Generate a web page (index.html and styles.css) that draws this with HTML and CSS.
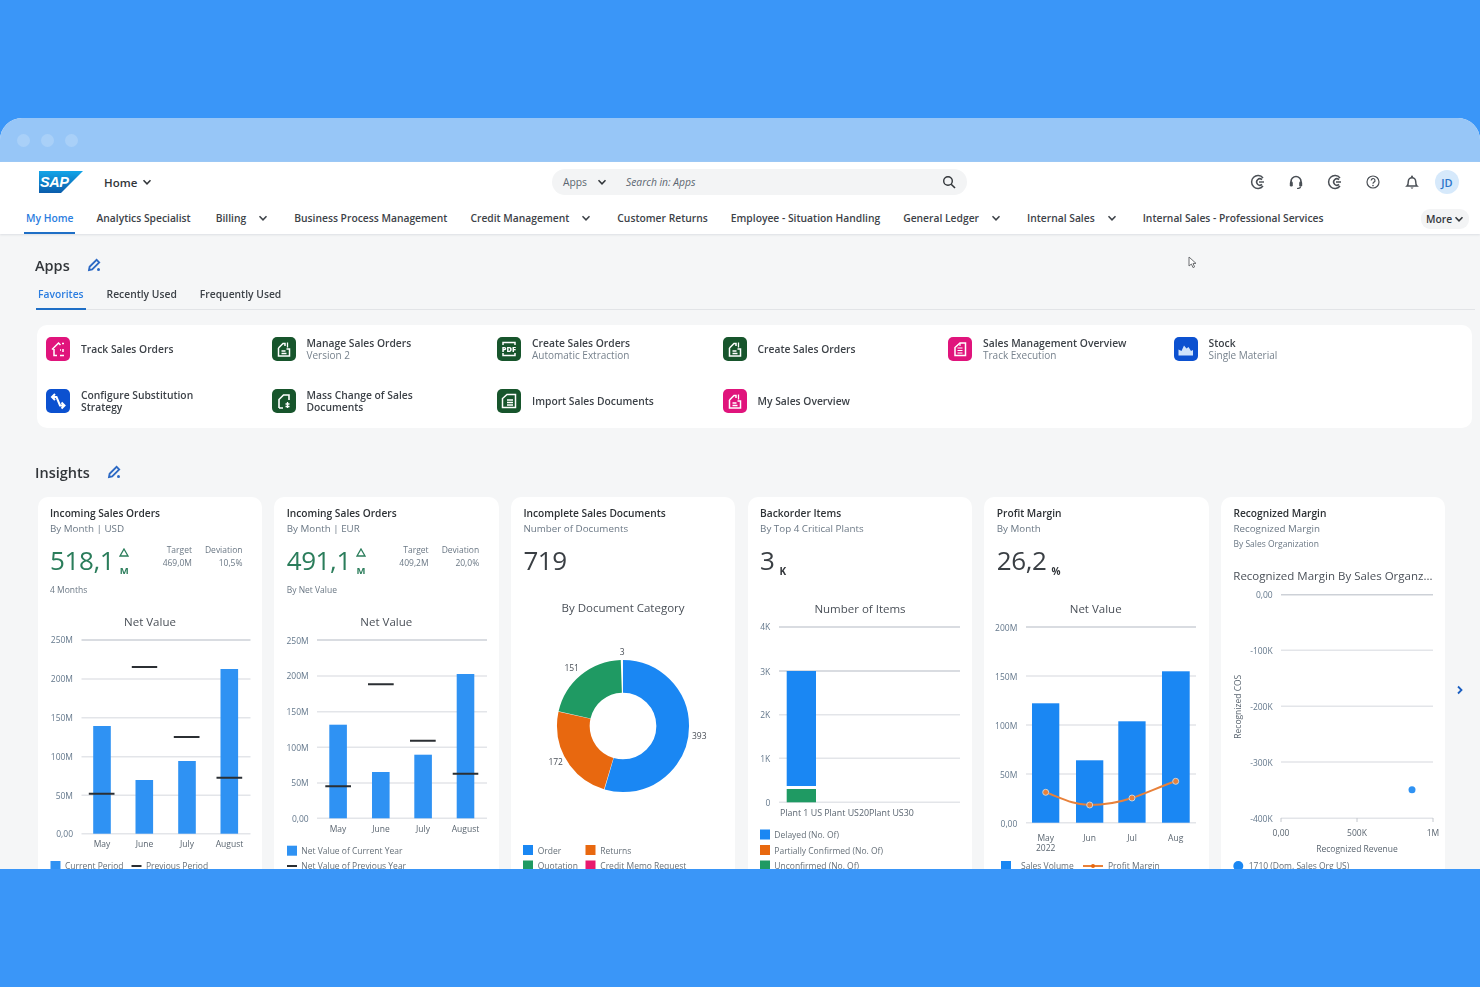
FILE: index.html
```html
<!DOCTYPE html>
<html lang="en">
<head>
    <meta charset="UTF-8">
    <title>SAP Home</title>
    <link rel="stylesheet" href="styles.css">
</head>
<body>
    <svg class="defs" width="0" height="0">
        <defs>
            <linearGradient id="sapBlue" x1="0" y1="0" x2="0" y2="1">
                <stop offset="0" stop-color="#12a5e8"/>
                <stop offset="1" stop-color="#0b5cab"/>
            </linearGradient>
            <symbol id="chev" viewBox="0 0 10 10">
                <path d="M1.5 3.2 5 6.8 8.5 3.2" fill="none" stroke="currentColor" stroke-width="1.5"/>
            </symbol>
            <symbol id="pen" viewBox="0 0 14 14">
                <path d="M2 12l.6-3.2L9.600 1.800l2.600 2.600-7 7z" fill="none" stroke="currentColor" stroke-width="1.800"/>
                <circle cx="11.500" cy="11.500" r="1.500" fill="currentColor"/>
            </symbol>
            <symbol id="ring" viewBox="0 0 16 16">
                <path d="M13 4a6.4 6.4 0 1 0 0 8" fill="none" stroke="currentColor" stroke-width="1.5"/>
                <path d="M12 5.6A3.2 3.2 0 1 0 12 10.4" fill="none" stroke="currentColor" stroke-width="1.5"/>
                <path d="M9 8h5" stroke="currentColor" stroke-width="1.4"/>
            </symbol>
        </defs>
    </svg>

    <div class="window">
        <div class="titlebar">
            <span class="dot"></span><span class="dot"></span><span class="dot"></span>
        </div>

        <header class="shell">
            <div class="shell-top">
                <div class="brand">
                    <svg class="logo" viewBox="0 0 44 22" width="44" height="22">
                        <path d="M0 0H44L22 22H0Z" fill="url(#sapBlue)"/>
                        <text x="1" y="16" class="logo-text">SAP</text>
                    </svg>
                    <span class="home">Home</span>
                    <svg class="chev"><use href="#chev"/></svg>
                </div>
                <div class="search">
                    <span class="search-scope">Apps</span>
                    <svg class="chev search-chev"><use href="#chev"/></svg>
                    <span class="search-input">Search in: Apps</span>
                    <svg class="search-icon" viewBox="0 0 14 14" width="14" height="14">
                        <circle cx="6" cy="6" r="4.3" fill="none" stroke="#32363a" stroke-width="1.4"/>
                        <path d="M9.2 9.2 13 13" stroke="#32363a" stroke-width="1.6"/>
                    </svg>
                </div>
                <div class="actions">
                    <svg class="action"><use href="#ring"/></svg>
                    <svg class="action" viewBox="0 0 16 16">
                        <path d="M3 10V7.5a5 5 0 0 1 10 0V10" fill="none" stroke="currentColor" stroke-width="1.6"/>
                        <rect x="1.8" y="7.6" width="3" height="5" rx="1.4" fill="currentColor"/>
                        <rect x="11.2" y="7.6" width="3" height="5" rx="1.4" fill="currentColor"/>
                        <path d="M12.5 12.5c0 1.4-1.6 2-3.5 2" fill="none" stroke="currentColor" stroke-width="1.2"/>
                    </svg>
                    <svg class="action"><use href="#ring"/></svg>
                    <svg class="action" viewBox="0 0 16 16">
                        <circle cx="8" cy="8" r="6" fill="none" stroke="currentColor" stroke-width="1.2"/>
                        <path d="M6.2 6.4a1.9 1.9 0 1 1 2.8 1.7c-.7.4-1 .8-1 1.6" fill="none" stroke="currentColor" stroke-width="1.2"/>
                        <circle cx="8" cy="11.6" r=".8" fill="currentColor"/>
                    </svg>
                    <svg class="action" viewBox="0 0 16 16">
                        <path d="M3 12c1.100-1 1.300-2 1.300-4.500a3.700 3.700 0 0 1 7.400 0c0 2.500.2 3.500 1.300 4.500z" fill="none" stroke="currentColor" stroke-width="1.5"/>
                        <path d="M6.500 13.600a1.600 1.600 0 0 0 3 0z" fill="currentColor"/>
                        <circle cx="8" cy="2.600" r="1" fill="currentColor"/>
                    </svg>
                    <span class="avatar">JD</span>
                </div>
            </div>
            <nav class="nav">
                <a class="nav-item active">My Home</a>
                <a class="nav-item wide">Analytics Specialist</a>
                <a class="nav-item has-menu">Billing <svg class="chev"><use href="#chev"/></svg></a>
                <a class="nav-item">Business Process Management</a>
                <a class="nav-item has-menu">Credit Management <svg class="chev"><use href="#chev"/></svg></a>
                <a class="nav-item">Customer Returns</a>
                <a class="nav-item">Employee - Situation Handling</a>
                <a class="nav-item has-menu">General Ledger <svg class="chev"><use href="#chev"/></svg></a>
                <a class="nav-item has-menu">Internal Sales <svg class="chev"><use href="#chev"/></svg></a>
                <a class="nav-item">Internal Sales - Professional Services</a>
                <a class="more">More <svg class="chev"><use href="#chev"/></svg></a>
            </nav>
        </header>

        <main class="content">
            <div class="section-head">
                <h2>Apps</h2>
                <svg class="pen"><use href="#pen"/></svg>
            </div>
            <div class="tabs">
                <a class="tab active">Favorites</a>
                <a class="tab">Recently Used</a>
                <a class="tab">Frequently Used</a>
            </div>

            <div class="apps">
                <div class="app">
                    <svg class="tile pink" viewBox="0 0 24 24">
                        <path d="M6 12.500 12.500 6l2 2M8 12v6.500h3M16 6.500h2M17 12v3M14 18.500h4M14 13h1" fill="none" stroke="#fff" stroke-width="1.500"/>
                    </svg>
                    <div><p class="app-name">Track Sales Orders</p></div>
                </div>
                <div class="app">
                    <svg class="tile green" viewBox="0 0 24 24">
                        <path d="M6.500 11 11 6.500h2V9M6.500 11v8h11v-7h-3" fill="none" stroke="#fff" stroke-width="1.500"/>
                        <path d="M9.500 14h4M9.500 16.500h5M15.500 5.500v5" stroke="#fff" stroke-width="1.300"/>
                    </svg>
                    <div><p class="app-name">Manage Sales Orders</p><p class="app-sub">Version 2</p></div>
                </div>
                <div class="app">
                    <svg class="tile green" viewBox="0 0 24 24">
                        <path d="M6 8V5.500h12V8M6 16v2.500h12V16" fill="none" stroke="#fff" stroke-width="1.500"/>
                        <text x="12" y="14.800" class="pdf">PDF</text>
                    </svg>
                    <div><p class="app-name">Create Sales Orders</p><p class="app-sub">Automatic Extraction</p></div>
                </div>
                <div class="app">
                    <svg class="tile green" viewBox="0 0 24 24">
                        <path d="M6.500 11 11 6.500h2V9M6.500 11v8h11v-7h-3" fill="none" stroke="#fff" stroke-width="1.500"/>
                        <path d="M9.500 14h4M9.500 16.500h5M15.500 5.500v5" stroke="#fff" stroke-width="1.300"/>
                    </svg>
                    <div><p class="app-name">Create Sales Orders</p></div>
                </div>
                <div class="app">
                    <svg class="tile pink" viewBox="0 0 24 24">
                        <path d="M7 10.500 12 6h5.500v12.500H7z" fill="none" stroke="#fff" stroke-width="1.500"/>
                        <path d="M9.500 11h5M9.500 13.500h5M9.500 16h5M12 6v3" stroke="#fff" stroke-width="1.200"/>
                    </svg>
                    <div><p class="app-name">Sales Management Overview</p><p class="app-sub">Track Execution</p></div>
                </div>
                <div class="app">
                    <svg class="tile blue" viewBox="0 0 24 24">
                        <path d="M4.500 18.500v-6l3 1.500 2.500-5.500 2.500 3 2-1.500 2.500 4 2-1v5.500z" fill="#cfe3fb"/>
                    </svg>
                    <div><p class="app-name">Stock</p><p class="app-sub">Single Material</p></div>
                </div>
                <div class="app">
                    <svg class="tile blue" viewBox="0 0 24 24">
                        <path d="M6.500 8h4l3.500 8.500h4M15.500 13.500l3 3-3 3M9 5 6 8l3 3" fill="none" stroke="#fff" stroke-width="2"/>
                    </svg>
                    <div><p class="app-name">Configure Substitution<br>Strategy</p></div>
                </div>
                <div class="app">
                    <svg class="tile green" viewBox="0 0 24 24">
                        <path d="M7 19v-8.500L11.500 6H17v5" fill="none" stroke="#fff" stroke-width="1.600"/>
                        <path d="M7 19h4M15.500 13v6M13.500 15h4M13.500 17.500h4" fill="none" stroke="#fff" stroke-width="1.300"/>
                    </svg>
                    <div><p class="app-name">Mass Change of Sales<br>Documents</p></div>
                </div>
                <div class="app">
                    <svg class="tile green" viewBox="0 0 24 24">
                        <path d="M5.500 18.500V9.500L10 5.500h8.500v13z" fill="none" stroke="#fff" stroke-width="1.500"/>
                        <path d="M10 11h6M10 13.500h6M10 16h6" stroke="#fff" stroke-width="1.300"/>
                    </svg>
                    <div><p class="app-name">Import Sales Documents</p></div>
                </div>
                <div class="app">
                    <svg class="tile pink" viewBox="0 0 24 24">
                        <path d="M6.500 11 11 6.500h2V9M6.500 11v8h11v-7h-3" fill="none" stroke="#fff" stroke-width="1.500"/>
                        <path d="M9.500 14h4M9.500 16.500h5M15.500 5.500v5" stroke="#fff" stroke-width="1.300"/>
                    </svg>
                    <div><p class="app-name">My Sales Overview</p></div>
                </div>
            </div>

            <div class="section-head insights-head">
                <h2>Insights</h2>
                <svg class="pen"><use href="#pen"/></svg>
            </div>

            <div class="cards">
                <section class="card">
                    <div class="card-head">
                        <p class="card-title">Incoming Sales Orders</p>
                        <p class="card-sub">By Month | USD</p>
                        <div class="kpi">
                            <span class="kpi-value good">518,1</span>
                            <span class="kpi-unit good">
                                <svg class="delta" viewBox="0 0 10 9" width="10" height="9"><path d="M5 1 9 8H1Z" fill="none" stroke="currentColor" stroke-width="1.300"/></svg>
                                M
                            </span>
                            <div class="kpi-side"><span>Target</span><span>469,0M</span></div>
                            <div class="kpi-side"><span>Deviation</span><span>10,5%</span></div>
                        </div>
                        <p class="card-foot">4 Months</p>
                    </div>
                    <svg class="chart" viewBox="37.500 600 224.500 269" width="224.500" height="269">
                        <text x="149.500" y="626" class="chart-title">Net Value</text>
                        <g class="grid">
                            <path class="grid-top" d="M81 640H250"/>
                            <path d="M81 679H250M81 717.700H250M81 756.700H250M81 795.300H250M81 833.700H250"/>
                        </g>
                        <g class="ticks">
                            <text x="72.500" y="643">250M</text><text x="72.500" y="682">200M</text><text x="72.500" y="721">150M</text>
                            <text x="72.500" y="760">100M</text><text x="72.500" y="799">50M</text><text x="72.500" y="837">0,00</text>
                        </g>
                        <g class="bars">
                            <rect x="92.700" y="726" width="17.600" height="107.700"/>
                            <rect x="135" y="780" width="17.600" height="53.700"/>
                            <rect x="177.700" y="761" width="17.600" height="72.700"/>
                            <rect x="220" y="669" width="17.600" height="164.700"/>
                        </g>
                        <path class="target" d="M88.300 793.700H114M131.300 667H156.700M173.300 737H199M216 777.700H241.700"/>
                        <g class="axis">
                            <text x="101.500" y="847">May</text><text x="144" y="847">June</text><text x="186.500" y="847">July</text><text x="229" y="847">August</text>
                        </g>
                        <g class="legend">
                            <rect x="50" y="861" width="10" height="10" fill="#2f92f3"/><text x="64.500" y="869">Current Period</text>
                            <path class="target" d="M131 866H141"/><text x="145.500" y="869">Previous Period</text>
                        </g>
                    </svg>
                </section>

                <section class="card">
                    <div class="card-head">
                        <p class="card-title">Incoming Sales Orders</p>
                        <p class="card-sub">By Month | EUR</p>
                        <div class="kpi">
                            <span class="kpi-value good">491,1</span>
                            <span class="kpi-unit good">
                                <svg class="delta" viewBox="0 0 10 9" width="10" height="9"><path d="M5 1 9 8H1Z" fill="none" stroke="currentColor" stroke-width="1.300"/></svg>
                                M
                            </span>
                            <div class="kpi-side"><span>Target</span><span>409,2M</span></div>
                            <div class="kpi-side"><span>Deviation</span><span>20,0%</span></div>
                        </div>
                        <p class="card-foot">By Net Value</p>
                    </div>
                    <svg class="chart" viewBox="274 600 224.500 269" width="224.500" height="269">
                        <text x="386.300" y="626" class="chart-title">Net Value</text>
                        <g class="grid">
                            <path class="grid-top" d="M317 640H487"/>
                            <path d="M317 676H487M317 711.700H487M317 747.300H487M317 783H487M317 818.300H487"/>
                        </g>
                        <g class="ticks">
                            <text x="308.700" y="644">250M</text><text x="308.700" y="679">200M</text><text x="308.700" y="715">150M</text>
                            <text x="308.700" y="751">100M</text><text x="308.700" y="786">50M</text><text x="308.700" y="822">0,00</text>
                        </g>
                        <g class="bars">
                            <rect x="329.300" y="724.700" width="17.600" height="93.600"/>
                            <rect x="372" y="772" width="17.600" height="46.300"/>
                            <rect x="414.300" y="754.700" width="17.600" height="63.600"/>
                            <rect x="456.700" y="674" width="17.600" height="144.300"/>
                        </g>
                        <path class="target" d="M325.300 786.300H351M368 684.300H393.700M410 740.700H435.700M452.700 773.700H478.300"/>
                        <g class="axis">
                            <text x="338" y="832">May</text><text x="381" y="832">June</text><text x="423" y="832">July</text><text x="465.500" y="832">August</text>
                        </g>
                        <g class="legend">
                            <rect x="287" y="845.700" width="10" height="10" fill="#2f92f3"/><text x="301.300" y="854">Net Value of Current Year</text>
                            <path class="target" d="M287 866H297"/><text x="301.300" y="869">Net Value of Previous Year</text>
                        </g>
                    </svg>
                </section>

                <section class="card">
                    <div class="card-head">
                        <p class="card-title">Incomplete Sales Documents</p>
                        <p class="card-sub">Number of Documents</p>
                        <div class="kpi">
                            <span class="kpi-value">719</span>
                        </div>
                    </div>
                    <svg class="chart" viewBox="511 600 224.500 269" width="224.500" height="269">
                        <text x="623" y="612" class="chart-title">By Document Category</text>
                        <g class="donut">
                            <circle class="slice" cx="623" cy="726" r="49.700" pathLength="719" stroke="#1a87f3" stroke-dasharray="392 327" transform="rotate(-90 623 726)"/>
                            <circle class="slice" cx="623" cy="726" r="49.700" pathLength="719" stroke="#e8680f" stroke-dasharray="171 548" stroke-dashoffset="-393" transform="rotate(-90 623 726)"/>
                            <circle class="slice" cx="623" cy="726" r="49.700" pathLength="719" stroke="#1f9a63" stroke-dasharray="150 569" stroke-dashoffset="-565" transform="rotate(-90 623 726)"/>
                        </g>
                        <g class="slice-labels">
                            <text x="622.300" y="655">3</text><text x="571.700" y="671">151</text><text x="555.700" y="765">172</text><text x="699.300" y="739">393</text>
                        </g>
                        <g class="legend">
                            <rect x="523" y="845" width="10" height="10" fill="#1a87f3"/><text x="537.700" y="853.500">Order</text>
                            <rect x="585.500" y="845" width="10" height="10" fill="#e8680f"/><text x="600.300" y="853.500">Returns</text>
                            <rect x="523" y="860.500" width="10" height="10" fill="#1f9a63"/><text x="537.700" y="869">Quotation</text>
                            <rect x="585.500" y="860.500" width="10" height="10" fill="#e9196f"/><text x="600.300" y="869">Credit Memo Request</text>
                        </g>
                    </svg>
                </section>

                <section class="card">
                    <div class="card-head">
                        <p class="card-title">Backorder Items</p>
                        <p class="card-sub">By Top 4 Critical Plants</p>
                        <div class="kpi">
                            <span class="kpi-value">3</span>
                            <span class="kpi-suffix">K</span>
                        </div>
                    </div>
                    <svg class="chart" viewBox="748 600 224.500 269" width="224.500" height="269">
                        <text x="860" y="613" class="chart-title">Number of Items</text>
                        <g class="grid">
                            <path class="grid-top" d="M779 627H960M779 671H960"/>
                            <path d="M779 714.700H960M779 758.300H960M779 802.300H960"/>
                        </g>
                        <g class="ticks">
                            <text x="770.300" y="630">4K</text><text x="770.300" y="674.500">3K</text><text x="770.300" y="718">2K</text>
                            <text x="770.300" y="762">1K</text><text x="770.300" y="805.500">0</text>
                        </g>
                        <rect x="786.700" y="671" width="29.300" height="115" fill="#1a87f3"/>
                        <rect x="786.700" y="789" width="29.300" height="13.300" fill="#1f9a63"/>
                        <text x="780" y="816" class="cats">Plant 1 US Plant US20Plant US30</text>
                        <g class="legend">
                            <rect x="760" y="829.500" width="10" height="10" fill="#1a87f3"/><text x="774.300" y="838">Delayed (No. Of)</text>
                            <rect x="760" y="845" width="10" height="10" fill="#e8680f"/><text x="774.300" y="853.500">Partially Confirmed (No. Of)</text>
                            <rect x="760" y="860.500" width="10" height="10" fill="#1f9a63"/><text x="774.300" y="869">Unconfirmed (No. Of)</text>
                        </g>
                    </svg>
                </section>

                <section class="card">
                    <div class="card-head">
                        <p class="card-title">Profit Margin</p>
                        <p class="card-sub">By Month</p>
                        <div class="kpi">
                            <span class="kpi-value">26,2</span>
                            <span class="kpi-suffix">%</span>
                        </div>
                    </div>
                    <svg class="chart" viewBox="985 600 224.500 269" width="224.500" height="269">
                        <text x="1096.700" y="613" class="chart-title">Net Value</text>
                        <g class="grid">
                            <path class="grid-top" d="M1027 627H1197"/>
                            <path d="M1027 676H1197M1027 725H1197M1027 774H1197M1027 822.700H1197"/>
                        </g>
                        <g class="ticks">
                            <text x="1018.300" y="630.500">200M</text><text x="1018.300" y="680">150M</text><text x="1018.300" y="729">100M</text>
                            <text x="1018.300" y="777.500">50M</text><text x="1018.300" y="826.500">0,00</text>
                        </g>
                        <g class="bars-wide">
                            <rect x="1033" y="703.300" width="27.300" height="119.400"/>
                            <rect x="1077" y="760.300" width="27.300" height="62.400"/>
                            <rect x="1119.300" y="721.300" width="27.300" height="101.400"/>
                            <rect x="1163" y="671.300" width="27.700" height="151.400"/>
                        </g>
                        <path class="trend" d="M1046.700 792.300C1062 798 1075 805 1090.700 805S1118 803 1133 798 1160 787 1176.700 781.300"/>
                        <g class="trend-dots">
                            <circle cx="1046.700" cy="792.300" r="3"/><circle cx="1090.700" cy="805" r="3"/><circle cx="1133" cy="798" r="3"/><circle cx="1176.700" cy="781.300" r="3"/>
                        </g>
                        <g class="axis">
                            <text x="1046.700" y="841">May</text><text x="1046.700" y="851">2022</text><text x="1090.700" y="841">Jun</text><text x="1133" y="841">Jul</text><text x="1176.700" y="841">Aug</text>
                        </g>
                        <g class="legend">
                            <rect x="1002" y="861" width="10" height="10" fill="#1a87f3"/><text x="1022" y="869">Sales Volume</text>
                            <path class="trend" d="M1084 866H1104"/><circle cx="1094" cy="866" r="2" fill="#e8680f"/><text x="1109" y="869">Profit Margin</text>
                        </g>
                    </svg>
                </section>

                <section class="card">
                    <div class="card-head short">
                        <p class="card-title">Recognized Margin</p>
                        <p class="card-sub">Recognized Margin</p>
                        <p class="card-note">By Sales Organization</p>
                    </div>
                    <svg class="chart" viewBox="1221 557 224.500 312" width="224.500" height="312">
                        <text x="1233.300" y="580" class="chart-title start">Recognized Margin By Sales Organz...</text>
                        <g class="grid">
                            <path class="grid-top" d="M1281 594.700H1433"/>
                            <path d="M1281 650.300H1433M1281 706.300H1433M1281 762H1433M1281 818.300H1433"/>
                        </g>
                        <g class="ticks">
                            <text x="1272.700" y="598">0,00</text><text x="1272.700" y="654">-100K</text><text x="1272.700" y="710">-200K</text>
                            <text x="1272.700" y="765.500">-300K</text><text x="1272.700" y="822">-400K</text>
                        </g>
                        <path class="tick-marks" d="M1281 818v4M1357 818v4M1433 818v4"/>
                        <circle cx="1412" cy="789.700" r="3.500" fill="#2f92f3"/>
                        <g class="axis">
                            <text x="1281" y="835.500">0,00</text><text x="1357" y="835.500">500K</text><text x="1433" y="835.500">1M</text>
                            <text x="1357" y="851.500">Recognized Revenue</text>
                            <text x="1241" y="706.700" transform="rotate(-90 1241 706.700)">Recognized COS</text>
                        </g>
                        <g class="legend">
                            <circle cx="1238.300" cy="866" r="5" fill="#1a87f3"/><text x="1248.700" y="869">1710 (Dom. Sales Org US)</text>
                        </g>
                    </svg>
                </section>
            </div>

            <svg class="next" viewBox="0 0 8 10" width="8" height="10"><path d="M2 1.500 5.500 5 2 8.500" fill="none" stroke="#1b5fc1" stroke-width="1.800"/></svg>
            <svg class="cursor" viewBox="0 0 10 13" width="10" height="13"><path d="M1 1v9l2.400-2 1.600 3.600 1.600-.7L5 7.400h3z" fill="#fff" stroke="#6a6d70" stroke-width="1"/></svg>
        </main>
    </div>
</body>
</html>
```

FILE: styles.css
```css
* {
    box-sizing: border-box;
}

body {
    margin: 0;
    height: 987px;
    padding-top: 118px;
    overflow: hidden;
    background-color: #3a96f8;
    color: #32363a;
    font-family: "Open Sans", "Noto Sans", sans-serif;
    font-size: 10.3px;
}

p, h2 {
    margin: 0;
}

.defs {
    position: absolute;
}

.window {
    height: 751px;
    border-radius: 22px 22px 0 0;
    overflow: hidden;
    background-color: #f5f6f7;
    filter: blur(0.5px);
}

.titlebar {
    height: 44px;
    padding-left: 17px;
    display: flex;
    align-items: center;
    gap: 11px;
    background-color: #97c6f7;
}

.dot {
    width: 13px;
    height: 13px;
    border-radius: 50%;
    background-color: #a9d0f8;
}

.chev {
    width: 10px;
    height: 10px;
    flex: none;
}

/* shell */

.shell {
    height: 72px;
    background-color: white;
    box-shadow: 0 1px 2px #dcdfe3;
}

.shell-top {
    height: 40px;
    display: grid;
    grid-template-columns: 552px 415px 1fr;
    align-items: center;
}

.brand {
    display: flex;
    align-items: center;
    padding-left: 39px;
}

.logo-text {
    font-family: "Liberation Sans", sans-serif;
    font-size: 14.5px;
    font-weight: bold;
    font-style: italic;
    letter-spacing: -0.5px;
    fill: white;
}

.home {
    margin-left: 21px;
    margin-right: 5px;
    font-size: 11.5px;
    font-weight: 600;
}

.search {
    height: 26px;
    border-radius: 13px;
    background-color: #f3f4f5;
    display: flex;
    align-items: center;
    padding: 0 11px;
    color: #5b6670;
}

.search-chev {
    margin-left: 10px;
    color: #32363a;
}

.search-input {
    margin-left: 19px;
    font-style: italic;
    flex: 1;
}

.actions {
    display: flex;
    justify-content: flex-end;
    align-items: center;
    gap: 22.5px;
    padding-right: 21px;
    color: #4a4f55;
}

.action {
    width: 16px;
    height: 16px;
}

.avatar {
    width: 24px;
    height: 24px;
    margin-left: -7px;
    border-radius: 50%;
    background-color: #d6e9fb;
    color: #2b74c9;
    font-size: 11px;
    font-weight: 600;
    display: flex;
    align-items: center;
    justify-content: center;
}

.nav {
    height: 32px;
    padding: 0 11px 0 24px;
    display: flex;
    gap: 19px;
}

.nav-item {
    padding: 0 2px 1px;
    display: flex;
    align-items: center;
    font-weight: 600;
    white-space: nowrap;
    color: #3d4248;
}

.nav-item.active {
    color: #2b7de0;
    box-shadow: inset 0 -2px #1f6fc6;
}

.nav-item.wide {
    margin-right: 2px;
}

.has-menu {
    gap: 12px;
    padding-right: 5px;
}

.more {
    margin: 7px 0 5px auto;
    padding: 0 5px;
    width: 48px;
    border-radius: 9px;
    background-color: #f3f4f5;
    display: flex;
    align-items: center;
    gap: 2px;
    font-weight: 600;
}

/* content */

.content {
    position: relative;
    padding: 21px 5px 0 36px;
    height: 635px;
    overflow: hidden;
}

.section-head {
    height: 20px;
    display: flex;
    align-items: center;
    gap: 17px;
}

.section-head h2 {
    margin-left: -1px;
    font-size: 14.5px;
    font-weight: 600;
}

.pen {
    width: 14px;
    height: 14px;
    color: #2c69c4;
}

.tabs {
    height: 26px;
    margin-top: 9px;
    padding-left: 2px;
    display: flex;
    gap: 23px;
    border-bottom: 1px solid #e2e4e7;
}

.tab {
    font-weight: 600;
    padding-top: 3px;
    color: #3d4248;
}

.tab.active {
    color: #2b7de0;
    margin: 0 -2px;
    padding: 3px 2px 0;
    box-shadow: 0 1px #1f6fc6, inset 0 -1px #1f6fc6;
}

.apps {
    height: 103px;
    width: 1435px;
    margin: 15px 0 0 1px;
    padding: 12px 0 0 9px;
    border-radius: 10px;
    background-color: white;
    display: grid;
    grid-template-columns: repeat(6, 225.5px);
    grid-auto-rows: 24px;
    row-gap: 28px;
}

.app {
    display: flex;
    align-items: center;
    gap: 11px;
}

.tile {
    width: 24px;
    height: 24px;
    border-radius: 5px;
    flex: none;
}

.pink {
    background-color: #e0147c;
}

.green {
    background-color: #17552c;
}

.blue {
    background-color: #0c51d0;
}

.pdf {
    font-size: 7.5px;
    font-weight: 800;
    text-anchor: middle;
    fill: white;
}

.app-name {
    font-weight: 600;
    line-height: 12.5px;
    white-space: nowrap;
    color: #3d4248;
}

.app-sub {
    font-size: 10px;
    line-height: 12.5px;
    color: #77828d;
}

.insights-head {
    margin-top: 34px;
}

.cards {
    margin: 15px 0 0 1.5px;
    display: flex;
    gap: 12.2px;
}

.card {
    width: 224.5px;
    height: 400px;
    flex: none;
    border-radius: 10px;
    background-color: white;
    overflow: hidden;
}

.card-head {
    height: 103px;
    padding: 9px 12.5px 0;
}

.card-head.short {
    height: 60px;
}

.card-title {
    font-size: 10.2px;
    font-weight: 600;
    line-height: 14px;
    color: #2e3236;
}

.card-sub {
    margin-top: 2px;
    font-size: 9.8px;
    line-height: 14px;
    color: #6b7885;
}

.card-note {
    margin-top: 2px;
    font-size: 8.5px;
    line-height: 12px;
    color: #6b7885;
}

.kpi {
    height: 36px;
    margin-top: 6px;
    display: flex;
    align-items: center;
    color: #32363a;
}

.kpi-value {
    font-size: 26px;
    line-height: 36px;
    letter-spacing: -0.4px;
    color: #3a3f44;
}

.kpi-value.good,
.kpi-unit.good {
    color: #2b7d5b;
}

.kpi-unit {
    width: 12px;
    margin-left: 4px;
    font-size: 9.5px;
    font-weight: 700;
    line-height: 11px;
    text-align: center;
    display: flex;
    flex-direction: column;
    align-items: center;
    gap: 8px;
    margin-top: 4px;
}

.kpi-suffix {
    align-self: flex-end;
    margin-left: 5px;
    font-size: 10px;
    font-weight: 700;
}

.kpi-side {
    display: flex;
    flex-direction: column;
    align-items: flex-end;
    gap: 1px;
    margin-bottom: 8px;
    margin-left: 13px;
    font-size: 8.5px;
    line-height: 12px;
    color: #6b7885;
}

.kpi-unit + .kpi-side {
    margin-left: auto;
}

.kpi-side:last-child {
    margin-right: 7px;
}

.card-foot {
    margin-top: 6px;
    font-size: 8.5px;
    line-height: 12px;
    color: #6b7885;
}

/* charts */

.chart {
    display: block;
}

.chart-title {
    font-size: 11.5px;
    text-anchor: middle;
    fill: #4a5058;
}

.chart-title.start {
    text-anchor: start;
}

.grid path {
    fill: none;
    stroke: #e3e5e9;
    stroke-width: 1.5;
}

.grid .grid-top {
    stroke: #cdd1d7;
}

.ticks text {
    font-size: 8.5px;
    text-anchor: end;
    fill: #64788c;
}

.axis text {
    font-size: 8.5px;
    text-anchor: middle;
    fill: #5a6570;
}

.cats {
    font-size: 8.85px;
    fill: #5a6570;
}

.legend text {
    font-size: 8.5px;
    fill: #667079;
}

.bars rect {
    fill: #2f92f3;
}

.bars-wide rect {
    fill: #1a87f3;
}

.target {
    fill: none;
    stroke: #2b2f33;
    stroke-width: 2;
}

.slice {
    fill: none;
    stroke-width: 32.7;
}

.slice-labels text {
    font-size: 8.5px;
    text-anchor: middle;
    fill: #4a5058;
}

.trend {
    fill: none;
    stroke: #e8813a;
    stroke-width: 2;
}

.trend-dots circle {
    fill: #e8813a;
    stroke: #c9d2da;
    stroke-width: 1;
}

.tick-marks {
    stroke: #c4c8ce;
}

/* over the content */

.next {
    position: absolute;
    left: 1456px;
    top: 451px;
}

.cursor {
    position: absolute;
    left: 1188px;
    top: 22px;
}
```
